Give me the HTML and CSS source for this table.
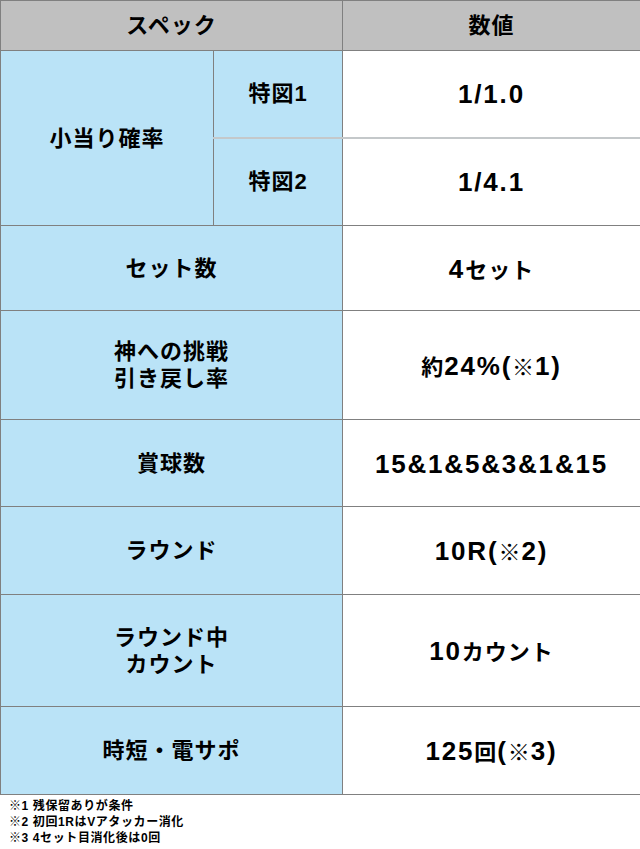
FILE: index.html
```html
<!DOCTYPE html>
<html lang="ja">
<head>
<meta charset="utf-8">
<link rel="stylesheet" href="styles.css">
</head>
<body>
<table class="spec">
  <colgroup>
    <col class="c1">
    <col class="c2">
    <col class="c3">
  </colgroup>
  <thead>
    <tr class="h-head">
      <th colspan="2" class="head">スペック</th>
      <th class="head">数値</th>
    </tr>
  </thead>
  <tbody>
    <tr class="h-sub1">
      <th rowspan="2" class="label">小当り確率</th>
      <th class="label sub-top">特図1</th>
      <td class="value sub-top"><span class="num">1/1.0</span></td>
    </tr>
    <tr class="h-sub2">
      <th class="label">特図2</th>
      <td class="value"><span class="num">1/4.1</span></td>
    </tr>
    <tr class="h-85">
      <th colspan="2" class="label">セット数</th>
      <td class="value"><span class="num">4</span>セット</td>
    </tr>
    <tr class="h-109">
      <th colspan="2" class="label">神への挑戦<br>引き戻し率</th>
      <td class="value">約<span class="num">24%(</span>※<span class="num">1)</span></td>
    </tr>
    <tr class="h-87">
      <th colspan="2" class="label">賞球数</th>
      <td class="value"><span class="num">15&amp;1&amp;5&amp;3&amp;1&amp;15</span></td>
    </tr>
    <tr class="h-88">
      <th colspan="2" class="label">ラウンド</th>
      <td class="value"><span class="num">10R(</span>※<span class="num">2)</span></td>
    </tr>
    <tr class="h-112">
      <th colspan="2" class="label">ラウンド中<br>カウント</th>
      <td class="value"><span class="num">10</span>カウント</td>
    </tr>
    <tr class="h-88">
      <th colspan="2" class="label">時短・電サポ</th>
      <td class="value"><span class="num">125</span>回<span class="num">(</span>※<span class="num">3)</span></td>
    </tr>
  </tbody>
</table>
<div class="notes">
  <p>※1 残保留ありが条件</p>
  <p>※2 初回1RはVアタッカー消化</p>
  <p>※3 4セット目消化後は0回</p>
</div>
</body>
</html>
```

FILE: styles.css
```css
html, body {
  margin: 0;
  padding: 0;
  background: #ffffff;
}
body {
  font-family: "Liberation Sans", "Noto Sans CJK JP", sans-serif;
  color: #000;
}
.spec {
  border-collapse: collapse;
  table-layout: fixed;
  width: 640px;
}
.c1 { width: 213px; }
.c2 { width: 129px; }
.c3 { width: 298px; }
.spec th, .spec td {
  border: 1px solid #808080;
  padding: 0;
  text-align: center;
  vertical-align: middle;
  font-size: 22px;
  font-weight: bold;
  line-height: 27px;
  letter-spacing: 1px;
}
.spec .head {
  background: #c0c0c0;
}
.spec .label {
  background: #bae3f7;
}
.spec .value {
  background: #ffffff;
  padding-top: 3px;
}
.spec .num {
  font-size: 26px;
  letter-spacing: 1.8px;
}
.spec .sub-top {
  border-bottom: 2px solid #c4c8ca;
}
.h-head { height: 50px; }
.h-sub1 { height: 87px; }
.h-sub2 { height: 88px; }
.h-85 { height: 85px; }
.h-109 { height: 109px; }
.h-87 { height: 87px; }
.h-88 { height: 88px; }
.h-112 { height: 112px; }
.notes {
  padding: 3px 0 0 9px;
}
.notes p {
  margin: 0;
  font-size: 12px;
  line-height: 16px;
  font-weight: bold;
  letter-spacing: 0.6px;
}
```
